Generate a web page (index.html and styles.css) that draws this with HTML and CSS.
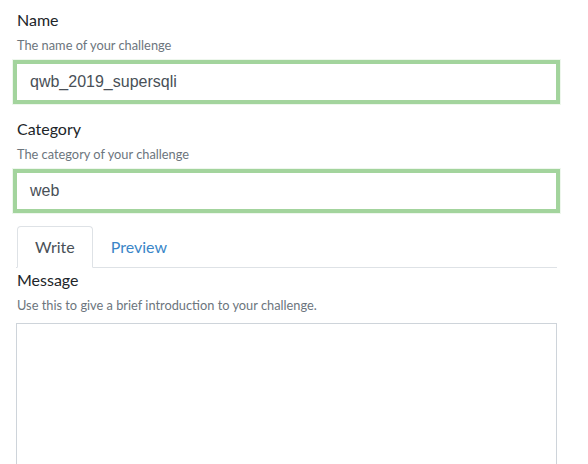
FILE: index.html
```html
<!DOCTYPE html>
<html>
<head>
<meta charset="utf-8">
<link rel="stylesheet" href="styles.css">
</head>
<body>
<div class="form">
  <div class="group">
    <label class="label">Name</label>
    <small class="help">The name of your challenge</small>
    <div class="field">qwb_2019_supersqli</div>
  </div>
  <div class="group">
    <label class="label">Category</label>
    <small class="help">The category of your challenge</small>
    <div class="field">web</div>
  </div>
  <div class="tabs">
    <div class="tab active">Write</div>
    <div class="tab">Preview</div>
  </div>
  <div class="group">
    <label class="label">Message</label>
    <small class="help">Use this to give a brief introduction to your challenge.</small>
    <div class="textarea"></div>
  </div>
</div>
</body>
</html>
```
FILE: styles.css
```css
html, body {
  margin: 0;
  padding: 0;
  background: #fff;
}
body {
  font-family: Lato, "Open Sans", sans-serif;
  color: #212529;
  font-size: 16px;
  line-height: 1.5;
  overflow: hidden;
}
.form {
  width: 541px;
  padding: 8px 0 0 16px;
}
.group {
  display: flex;
  flex-direction: column;
  margin-bottom: 13px;
}
.label {
  display: block;
  font-size: 16px;
  line-height: 24px;
  padding-left: 1px;
}
.help {
  display: block;
  font-size: 12.8px;
  line-height: 19px;
  color: #6c757d;
  margin-top: 4px;
  padding-left: 1px;
  margin-bottom: 5px;
}
.field {
  margin-left: -3px;
  margin-right: -3px;
  height: 44px;
  box-sizing: border-box;
  border: 4px solid #a3d49d;
  box-shadow: 0 0 0 1px #eef7ed;
  font-family: "Liberation Sans", Arial, sans-serif;
  font-size: 16px;
  color: #495057;
  padding: 0 13px;
  display: flex;
  align-items: center;
}
.tabs {
  display: flex;
  border-bottom: 1px solid #dee2e6;
  margin-top: 1px;
  padding-left: 1px;
}
.tab {
  padding: 8px 17px;
  border: 1px solid transparent;
  border-top-left-radius: 4px;
  border-top-right-radius: 4px;
  margin-bottom: -1px;
  color: #3a86c8;
  font-size: 16px;
  line-height: 24px;
}
.tab.active {
  color: #495057;
  border-color: #dee2e6 #dee2e6 #fff;
  background: #fff;
}
.tabs + .group .label {
  margin-top: 0;
}
.textarea {
  height: 140px;
  border: 1px solid #ced4da;
  border-bottom: none;
  margin-top: 3px;
}
```
